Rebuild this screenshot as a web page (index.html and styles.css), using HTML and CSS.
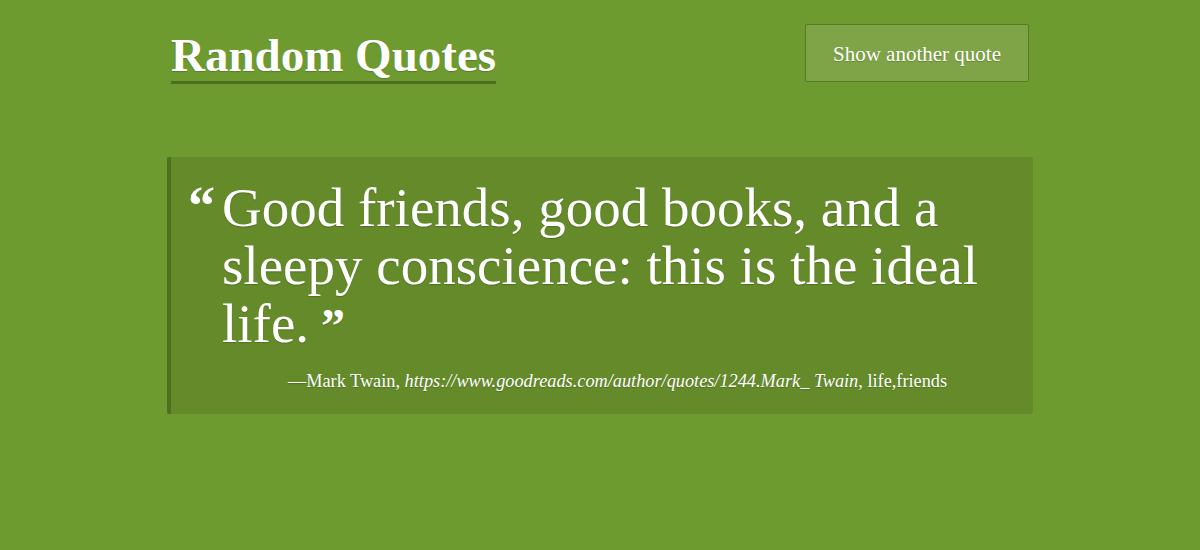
FILE: index.html
```html
<!DOCTYPE html>
<html>
<head>
<meta charset="utf-8">
<link rel="stylesheet" href="styles.css">
</head>
<body>
<div class="page">
  <header class="top">
    <h1 class="title">Random Quotes</h1>
    <button class="btn">Show another quote</button>
  </header>
  <section class="card">
    <span class="mark open">&#8220;</span>
    <div class="body">
      <p class="quote">Good friends, good books, and a sleepy conscience: this is the ideal life.</p>
      <p class="attr">—Mark Twain, <em class="src">https://www.goodreads.com/author/quotes/1244.Mark_ Twain</em>, life,friends</p>
    </div>
  </section>
</div>
</body>
</html>
```

FILE: styles.css
```css
html, body {
  margin: 0;
  padding: 0;
  background: #6e9b2f;
  color: #ffffff;
  font-family: "Liberation Serif", "DejaVu Serif", serif;
}
.page {
  width: 866px;
  margin: 0 auto;
  padding-top: 24px;
}
.top {
  display: flex;
  justify-content: space-between;
  align-items: flex-start;
  padding-left: 4px;
  padding-right: 4px;
}
.title {
  margin: 8px 0 0;
  font-size: 47px;
  font-weight: bold;
  line-height: 46px;
  padding-bottom: 3px;
  border-bottom: 3px solid #4c6f20;
  text-shadow: 0 1px 1px rgba(0,0,0,0.2);
}
.btn {
  width: 224px;
  height: 58px;
  padding-top: 3px;
  background: #7fa447;
  border: 1px solid #577b25;
  border-radius: 2px;
  color: #fff;
  font-family: inherit;
  font-size: 21px;
  text-shadow: 0 1px 1px rgba(0,0,0,0.2);
  cursor: pointer;
}
.card {
  margin-top: 73px;
  display: flex;
  background: #648a2a;
  border-left: 4px solid #4c6f20;
  border-radius: 2px;
  padding: 22px 20px 22px 17px;
}
.mark {
  font-weight: bold;
  font-size: 54px;
}
.open {
  width: 34px;
  flex: none;
  padding-top: 12px;
  line-height: 30px;
  height: 30px;
}
.body {
  flex: 1;
}
.quote {
  margin: 0;
  font-size: 55px;
  line-height: 58px;
  text-shadow: 0 1px 1px rgba(0,0,0,0.2);
}
.quote::after {
  content: " \201D";
  font-weight: bold;
  font-size: 48px;
  line-height: 0;
}
.attr {
  margin: 18px 0 0;
  text-align: center;
  font-size: 18.3px;
  text-shadow: 0 1px 1px rgba(0,0,0,0.2);
}
.src {
  font-style: italic;
}
```
